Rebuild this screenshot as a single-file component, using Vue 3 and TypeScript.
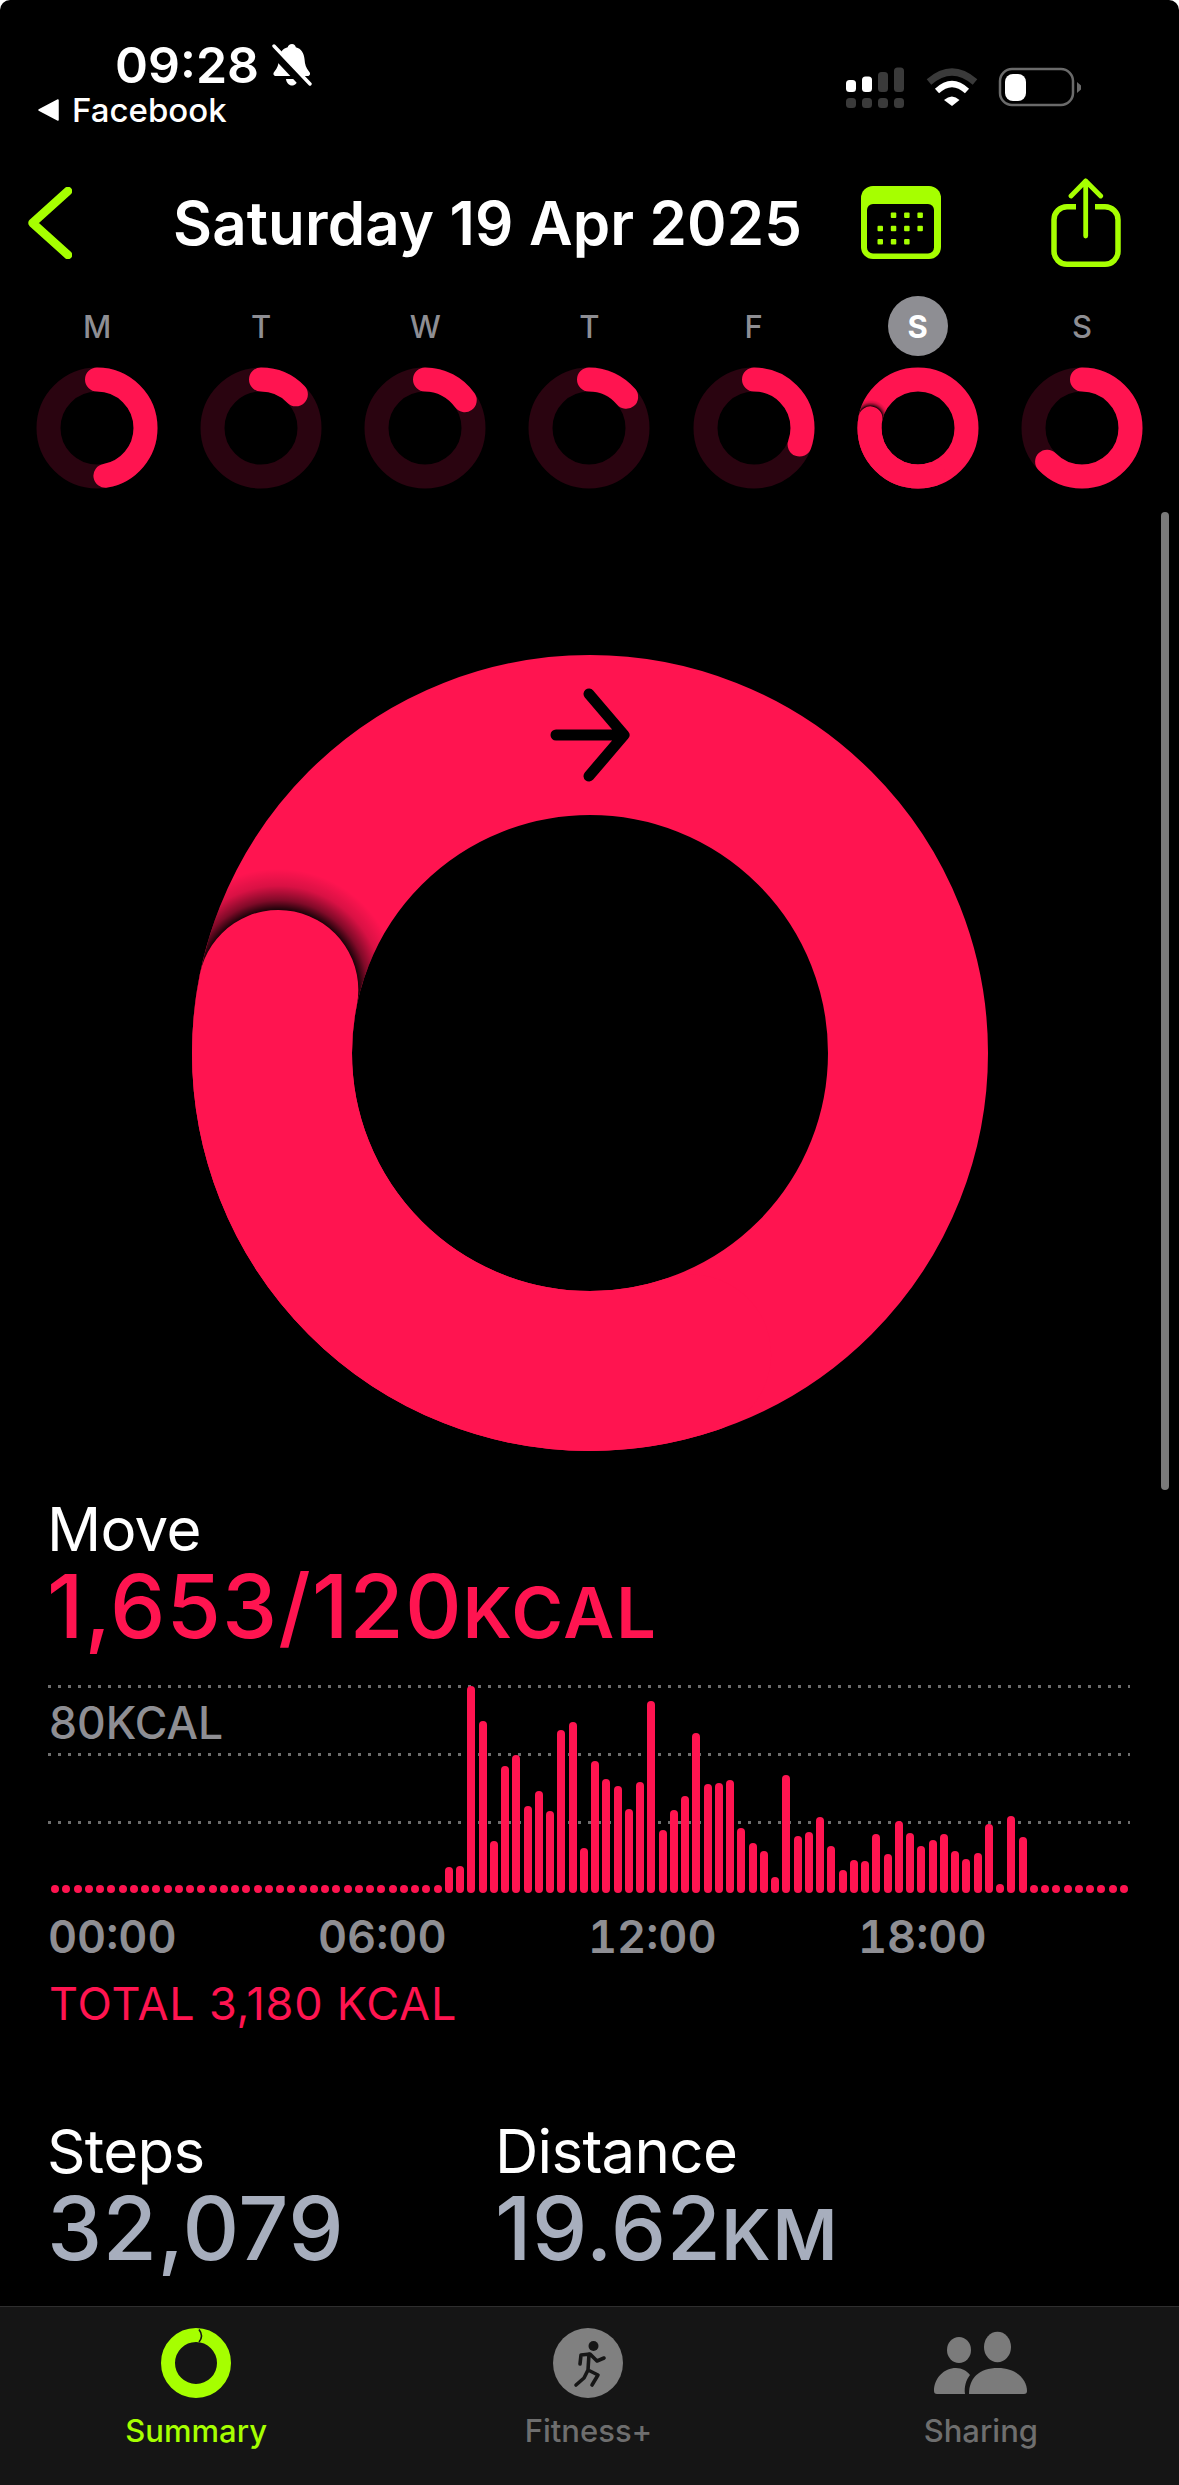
<template>
  <div class="screen">
    <header class="status">
      <div class="status-left">
        <div class="clock">
          <span class="time">09:28</span>
          <svg class="bell" width="40" height="44" viewBox="0 0 40 44">
            <path d="M20 1c2.200 0 3.500 1.500 3.800 3.200 5.500 1.400 8.200 6 8.700 11.800.4 5.500 1.500 9 4.500 12.500 1.800 2 1.300 4.500-1.500 4.500H4c-2.800 0-3.300-2.500-1.500-4.500 3-3.500 4.100-7 4.500-12.500.5-5.800 3.200-10.400 8.700-11.800C16 2.500 17.800 1 20 1z" fill="#fff" />
            <path d="M14 36h12c-.5 4-3 6.500-6 6.500S14.500 40 14 36z" fill="#fff" />
            <path d="M-1 6 33 42" stroke="#000" stroke-width="9" />
            <path d="M2 3 38 41" stroke="#fff" stroke-width="3.400" stroke-linecap="round" />
          </svg>
        </div>
        <div class="back-app">
          <svg width="21" height="22" viewBox="0 0 21 22"><path d="M1 11 20 1v20z" fill="#fff" stroke="#fff" stroke-width="1.500" stroke-linejoin="round" /></svg>
          <span>Facebook</span>
        </div>
      </div>
      <svg class="status-right" width="236" height="42" viewBox="846 67 236 42">
        <rect x="846" y="80" width="10" height="12" rx="3.500" fill="#fff" />
        <rect x="862" y="76.500" width="10" height="15.500" rx="3.500" fill="#fff" />
        <rect x="878" y="72" width="10" height="20" rx="3.500" fill="#3a3a3a" />
        <rect x="894" y="67.500" width="10" height="24.500" rx="3.500" fill="#3a3a3a" />
        <rect v-for="x in [846, 862, 878, 894]" :key="x" :x="x" y="98" width="10" height="10" rx="3.500" fill="#3a3a3a" />
        <path d="M929 82Q952 62 975 82" fill="none" stroke="#3a3a3a" stroke-width="7" />
        <path d="M937 91Q952 77 967 91" fill="none" stroke="#fff" stroke-width="6" />
        <path d="M944 100Q952 93 959.500 100L952 106z" fill="#fff" />
        <rect x="1000" y="69" width="73" height="36" rx="12" fill="none" stroke="#6a6a6a" stroke-width="2.500" />
        <rect x="1005" y="74" width="21" height="27" rx="8" fill="#fff" />
        <path d="M1077 82v11l4-3.500v-4z" fill="#6a6a6a" />
      </svg>
    </header>

    <nav class="nav">
      <svg class="chevron" width="44" height="72" viewBox="0 0 44 72">
        <path d="M40 4 4.500 36 40 68" fill="none" stroke="#a6ff00" stroke-width="8.500" stroke-linecap="round" stroke-linejoin="round" />
      </svg>
      <h1 class="title">Saturday 19 Apr 2025</h1>
      <div class="nav-actions">
        <svg width="80" height="74" viewBox="0 0 80 74">
          <rect width="80" height="73" rx="12" fill="#a6ff00" />
          <rect x="6" y="18" width="67" height="49.500" rx="6" fill="#000" />
          <rect v-for="d in calDots" :key="d.x + '-' + d.y" :x="d.x" :y="d.y" width="5.500" height="5.500" rx="1" fill="#a6ff00" />
        </svg>
        <svg width="76" height="90" viewBox="0 0 76 90">
          <path d="M28 28.750H19a13 13 0 0 0-13 13v31.500a13 13 0 0 0 13 13h38a13 13 0 0 0 13-13v-31.500a13 13 0 0 0-13-13H47" fill="none" stroke="#a6ff00" stroke-width="5.500" />
          <path d="M37.700 58V3M23 18 37.700 3l15 15" fill="none" stroke="#a6ff00" stroke-width="4.800" stroke-linecap="round" stroke-linejoin="round" />
        </svg>
      </div>
    </nav>

    <section class="week">
      <div v-for="(d, i) in week" :key="i" class="day">
        <div class="day-letter" :class="{ selected: d.selected }">{{ d.letter }}</div>
        <svg width="122" height="122" viewBox="0 0 122 122">
          <defs>
            <clipPath v-if="d.selected" id="small-clip">
              <path :d="annulus(61, 60.500, 36.500)" clip-rule="evenodd" />
            </clipPath>
          </defs>
          <circle cx="61" cy="61" r="48.500" fill="none" :stroke="d.selected ? PINK : '#2a0410'" stroke-width="24" />
          <circle v-if="d.selected" :cx="point(61, 48.500, d.end).x" :cy="point(61, 48.500, d.end).y" r="18.500" fill="url(#cap-shadow)" clip-path="url(#small-clip)" />
          <circle
            cx="61" cy="61" r="48.500" fill="none" :stroke="PINK" stroke-width="24" stroke-linecap="round"
            pathLength="360" transform="rotate(-90 61 61)"
            :stroke-dasharray="d.selected ? '120 360' : d.end + ' 360'"
            :stroke-dashoffset="d.selected ? 120 - d.end : 0"
          />
        </svg>
      </div>
    </section>

    <div class="big-ring">
      <svg width="796" height="796" viewBox="0 0 796 796">
        <defs>
          <radialGradient id="cap-shadow">
            <stop offset="0.66" stop-color="#000" stop-opacity="0.9" />
            <stop offset="0.74" stop-color="#000" stop-opacity="0.5" />
            <stop offset="0.86" stop-color="#000" stop-opacity="0.15" />
            <stop offset="1" stop-color="#000" stop-opacity="0" />
          </radialGradient>
          <clipPath id="big-clip">
            <path :d="annulus(398, 398, 238)" clip-rule="evenodd" />
          </clipPath>
        </defs>
        <circle cx="398" cy="398" r="318" fill="none" :stroke="PINK" stroke-width="160" />
        <circle :cx="point(398, 318, MOVE_END).x" :cy="point(398, 318, MOVE_END).y" r="121" fill="url(#cap-shadow)" clip-path="url(#big-clip)" />
        <circle
          cx="398" cy="398" r="318" fill="none" :stroke="PINK" stroke-width="160" stroke-linecap="round"
          pathLength="360" transform="rotate(-90 398 398)" stroke-dasharray="120 360" :stroke-dashoffset="120 - MOVE_END"
        />
        <path d="M364 80H431M397 39l35 41-35 41" fill="none" stroke="#000" stroke-width="11" stroke-linecap="round" stroke-linejoin="round" />
      </svg>
    </div>

    <section class="move">
      <div class="label">Move</div>
      <div class="value pink">1,653/120<span class="unit">KCAL</span></div>
    </section>

    <div class="chart">
      <i v-for="y in [1, 69, 137]" :key="y" class="gridline" :style="{ top: y + 'px' }"></i>
      <span class="chart-max">80KCAL</span>
      <div class="bars">
        <b v-for="(h, i) in bars" :key="i" class="bar" :style="{ height: h + 'px' }"></b>
      </div>
    </div>
    <div class="hours">
      <span v-for="t in ['00:00', '06:00', '12:00', '18:00']" :key="t">{{ t }}</span>
    </div>
    <div class="total">TOTAL 3,180 KCAL</div>

    <section class="stats">
      <div>
        <div class="label">Steps</div>
        <div class="value grey">32,079</div>
      </div>
      <div>
        <div class="label">Distance</div>
        <div class="value grey">19.62<span class="unit">KM</span></div>
      </div>
    </section>

    <footer class="tabbar">
      <div class="tab active">
        <svg width="70" height="70" viewBox="0 0 70 70">
          <circle cx="35" cy="35" r="28" fill="none" stroke="#a6ff00" stroke-width="14" />
          <path d="M38 1.500Q43 8 38 14" fill="none" stroke="#151515" stroke-width="1.600" />
        </svg>
        <span>Summary</span>
      </div>
      <div class="tab">
        <svg width="70" height="70" viewBox="0 0 70 70">
          <circle cx="35" cy="35" r="35" fill="#808080" />
          <circle cx="40.500" cy="18" r="5" fill="#161616" />
          <path d="M27 36l1-9 9-1 7 7 7-3M36 26l-1 16 10 5-6 10M35 42l-4 8-8 7" fill="none" stroke="#161616" stroke-width="3.600" stroke-linecap="round" stroke-linejoin="round" />
        </svg>
        <span>Fitness+</span>
      </div>
      <div class="tab">
        <svg width="94" height="70" viewBox="935 2328 94 70">
          <ellipse cx="960" cy="2350" rx="12" ry="13" fill="#7b7b7b" />
          <ellipse cx="998.500" cy="2347" rx="13.500" ry="15.300" fill="#7b7b7b" />
          <path d="M970 2394c0-16 10-26 29-26s29 12 29 23q0 3-3 3z" fill="#7b7b7b" />
          <path d="M935 2391c0-13 10-23 22-23 6 0 11 3 14 7-4 5-6 12-5 19h-28q-3 0-3-3z" fill="#7b7b7b" />
        </svg>
        <span>Sharing</span>
      </div>
    </footer>

    <div class="scrollbar"></div>
  </div>
</template>

<script setup lang="ts">
const PINK = '#ff1450'
const MOVE_END = 281.45

const week = [
  { letter: 'M', end: 170, selected: false },
  { letter: 'T', end: 46, selected: false },
  { letter: 'W', end: 55, selected: false },
  { letter: 'T', end: 50, selected: false },
  { letter: 'F', end: 110, selected: false },
  { letter: 'S', end: MOVE_END, selected: true },
  { letter: 'S', end: 226, selected: false },
]

const activeBars = [
  26, 27, 207, 172, 52, 127, 138, 87, 102, 82, 163, 171, 45, 132, 114, 107, 84, 111, 192, 63, 83, 97, 160, 109, 110,
  113, 65, 50, 42, 16, 118, 57, 61, 76, 47, 23, 33, 32, 59, 39, 72, 60, 47, 53, 59, 42, 34, 40, 69, 9, 77, 56,
]
const bars = [...Array(35).fill(8), ...activeBars, ...Array(9).fill(8)]

// calendar glyph: 3 rows of dots, first row skips col 0, last row skips col 3
const calDots: { x: number; y: number }[] = []
;[0, 1, 2].forEach((row) => {
  ;[0, 1, 2, 3].forEach((col) => {
    if ((row === 0 && col === 0) || (row === 2 && col === 3)) return
    calDots.push({ x: 16.500 + col * 13.300, y: 26.500 + row * 13.200 })
  })
})

function point(c: number, r: number, deg: number) {
  const a = (deg * Math.PI) / 180
  return { x: c + r * Math.sin(a), y: c - r * Math.cos(a) }
}

function annulus(c: number, outer: number, inner: number) {
  const ring = (r: number) => `M${c - r} ${c}a${r} ${r} 0 1 0 ${r * 2} 0a${r} ${r} 0 1 0 ${-r * 2} 0z`
  return ring(outer) + ring(inner)
}
</script>

<style scoped>
.screen {
  position: relative;
  width: 1179px;
  height: 2485px;
  overflow: hidden;
  display: flex;
  flex-direction: column;
  background: #000;
  color: #fff;
  border-radius: 10px 10px 0 0;
  font-family: Inter, "Noto Sans", sans-serif;
}

.status {
  height: 170px;
  display: flex;
  justify-content: space-between;
  flex-shrink: 0;
}
.status-left {
  padding-top: 35px;
}
.clock {
  height: 60px;
  padding-left: 115px;
  display: flex;
  align-items: center;
  gap: 13px;
}
.time {
  font-size: 50px;
  line-height: 60px;
  font-weight: 600;
}
.back-app {
  height: 30px;
  padding-left: 38px;
  display: flex;
  align-items: center;
  gap: 13px;
  font-size: 33px;
  line-height: 30px;
  font-weight: 500;
}
.status-right {
  margin: 67px 97px 0 0;
}

.nav {
  height: 106px;
  flex-shrink: 0;
  display: flex;
  align-items: center;
  padding: 0 55px 0 28px;
}
.chevron {
  margin-right: 101px;
}
.title {
  margin: 0;
  font-size: 60px;
  line-height: 70px;
  font-weight: 600;
  letter-spacing: 0.15px;
  white-space: nowrap;
}
.nav-actions {
  margin-left: auto;
  display: flex;
  align-items: center;
  gap: 107px;
}

.week {
  display: grid;
  grid-template-columns: repeat(7, 164.15px);
  margin: 20px 0 0 15px;
  flex-shrink: 0;
}
.day {
  display: flex;
  flex-direction: column;
  align-items: center;
  gap: 11px;
}
.day-letter {
  width: 60px;
  height: 60px;
  display: flex;
  align-items: center;
  justify-content: center;
  border-radius: 50%;
  font-size: 31px;
  font-weight: 500;
  color: #8e8e93;
}
.day-letter.selected {
  background: #8e8e93;
  color: #fff;
  font-weight: 700;
}

.big-ring {
  margin-top: 166px;
  height: 796px;
  display: flex;
  justify-content: center;
  flex-shrink: 0;
}

.move {
  margin: 43px 0 0 47px;
}
.label {
  font-size: 60px;
  line-height: 70px;
  letter-spacing: -0.7px;
}
.value {
  font-size: 88px;
  line-height: 84px;
  font-weight: 500;
  white-space: nowrap;
}
.unit {
  font-size: 70px;
  line-height: 1;
  font-weight: 600;
  letter-spacing: 2px;
}
.pink {
  color: #ff1450;
  letter-spacing: 1.1px;
}
.grey {
  color: #a7aebd;
  letter-spacing: 0.6px;
}

.chart {
  position: relative;
  margin: 36px 0 0 48px;
  width: 1082px;
  height: 209px;
  flex-shrink: 0;
}
.gridline {
  position: absolute;
  left: 0;
  right: 0;
  height: 3px;
  background: repeating-linear-gradient(90deg, #6e6e6e 0 3px, transparent 3px 10px);
}
.chart-max {
  position: absolute;
  left: 1px;
  top: 14px;
  font-size: 44.5px;
  line-height: 50px;
  font-weight: 500;
  color: #8e8e93;
}
.bars {
  position: absolute;
  left: 1.400px;
  bottom: 0;
  display: grid;
  grid-template-columns: repeat(96, 11.25px);
  align-items: end;
  justify-items: center;
}
.bar {
  display: block;
  width: 8px;
  border-radius: 4px;
  background: #ff1450;
}

.hours {
  margin: 19px 0 0 48px;
  display: grid;
  grid-template-columns: repeat(4, 270px);
  font-size: 45px;
  line-height: 50px;
  font-weight: 600;
  font-variant-numeric: tabular-nums;
  color: #8e8e93;
}
.total {
  margin: 17px 0 0 49px;
  font-size: 45px;
  line-height: 50px;
  letter-spacing: 0.8px;
  color: #ff1450;
}

.stats {
  margin: 87px 0 0 47px;
  display: grid;
  grid-template-columns: 448px 1fr;
}

.tabbar {
  margin-top: auto;
  height: 179px;
  flex-shrink: 0;
  box-sizing: border-box;
  border-top: 1px solid #2e2e2e;
  background: #151515;
  display: grid;
  grid-template-columns: repeat(3, 1fr);
  padding: 21px 2px 0 0;
}
.tab {
  display: flex;
  flex-direction: column;
  align-items: center;
  gap: 16px;
  font-size: 31px;
  line-height: 34px;
  font-weight: 500;
  color: #6e6e6e;
}
.tab.active {
  color: #a6ff00;
}

.scrollbar {
  position: absolute;
  left: 1161px;
  top: 512px;
  width: 8px;
  height: 978px;
  border-radius: 4px;
  background: #7a7a7a;
}
</style>

<style>
body {
  background: #fff;
}
</style>
